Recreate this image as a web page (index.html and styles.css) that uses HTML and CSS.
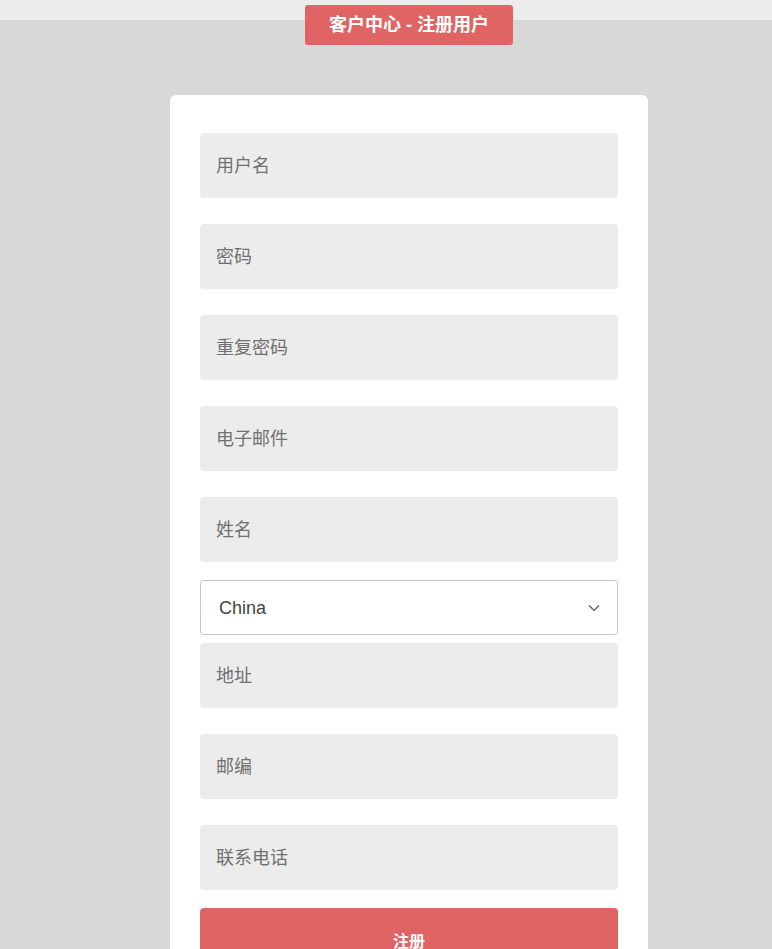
FILE: index.html
```html
<!DOCTYPE html>
<html lang="zh-CN">
<head>
  <meta charset="UTF-8" />
  <meta name="viewport" content="width=device-width, initial-scale=1.0" />
  <title>客户中心 - 注册用户</title>
  <link rel="stylesheet" href="styles.css">
</head>
<body>
  <h1 class="badge">客户中心 - 注册用户</h1>

  <form class="card" onsubmit="return false">
    <input class="field" type="text" placeholder="用户名">
    <input class="field" type="password" placeholder="密码">
    <input class="field" type="password" placeholder="重复密码">
    <input class="field" type="email" placeholder="电子邮件">
    <input class="field" type="text" placeholder="姓名">

    <div class="select-wrap">
      <select class="country">
        <option>China</option>
        <option>Hong Kong</option>
        <option>Taiwan</option>
        <option>Singapore</option>
      </select>
      <svg class="chevron" width="12" height="8" viewBox="0 0 12 8">
        <path d="M1 1.5 L6 6.5 L11 1.5" fill="none" stroke="#555" stroke-width="1.2"/>
      </svg>
    </div>

    <input class="field" type="text" placeholder="地址">
    <input class="field" type="text" placeholder="邮编">
    <input class="field" type="tel" placeholder="联系电话">

    <button class="submit" type="submit">注册</button>
  </form>
</body>
</html>
```

FILE: styles.css
```css
body {
  margin: 0;
  padding-left: 46px;
  background: linear-gradient(#ececec 0, #ececec 20px, #d8d8d8 20px) no-repeat, #d8d8d8;
  background-size: 100% 20px, auto;
  font-family: "Liberation Sans", "Noto Sans CJK SC", sans-serif;
  display: flex;
  flex-direction: column;
  align-items: center;
  min-height: 100vh;
}

.badge {
  margin: 5px 0 0;
  width: 208px;
  height: 40px;
  box-sizing: border-box;
  background: #e06464;
  color: #fff;
  font-size: 18px;
  font-weight: 700;
  line-height: 40px;
  text-align: center;
  border-radius: 3px;
}

.card {
  margin-top: 50px;
  width: 478px;
  box-sizing: border-box;
  background: #fff;
  border-radius: 6px;
  padding: 38px 30px 40px;
  display: flex;
  flex-direction: column;
}

.field {
  height: 65px;
  box-sizing: border-box;
  border: none;
  border-radius: 4px;
  background: #ececec;
  padding: 2px 16px 0;
  font-family: inherit;
  font-size: 18px;
  color: #444;
  margin-bottom: 26px;
  outline: none;
}

.field::placeholder {
  color: #707070;
}

.field:nth-of-type(5) {
  margin-bottom: 18px;
}

.select-wrap {
  position: relative;
  margin-bottom: 8px;
}

.country {
  width: 100%;
  height: 55px;
  box-sizing: border-box;
  border: 1px solid #c8c8c8;
  border-radius: 3px;
  background: #fff;
  padding: 0 18px;
  font-family: inherit;
  font-size: 18px;
  color: #444;
  appearance: none;
  -webkit-appearance: none;
  outline: none;
}

.chevron {
  position: absolute;
  right: 18px;
  top: 24px;
  pointer-events: none;
}

.field:last-of-type {
  margin-bottom: 18px;
}

.submit {
  border: none;
  border-radius: 4px;
  background: #e06464;
  color: #fff;
  font-family: inherit;
  font-size: 16px;
  font-weight: 700;
  line-height: 20px;
  padding: 24px 0;
  cursor: pointer;
}
```
